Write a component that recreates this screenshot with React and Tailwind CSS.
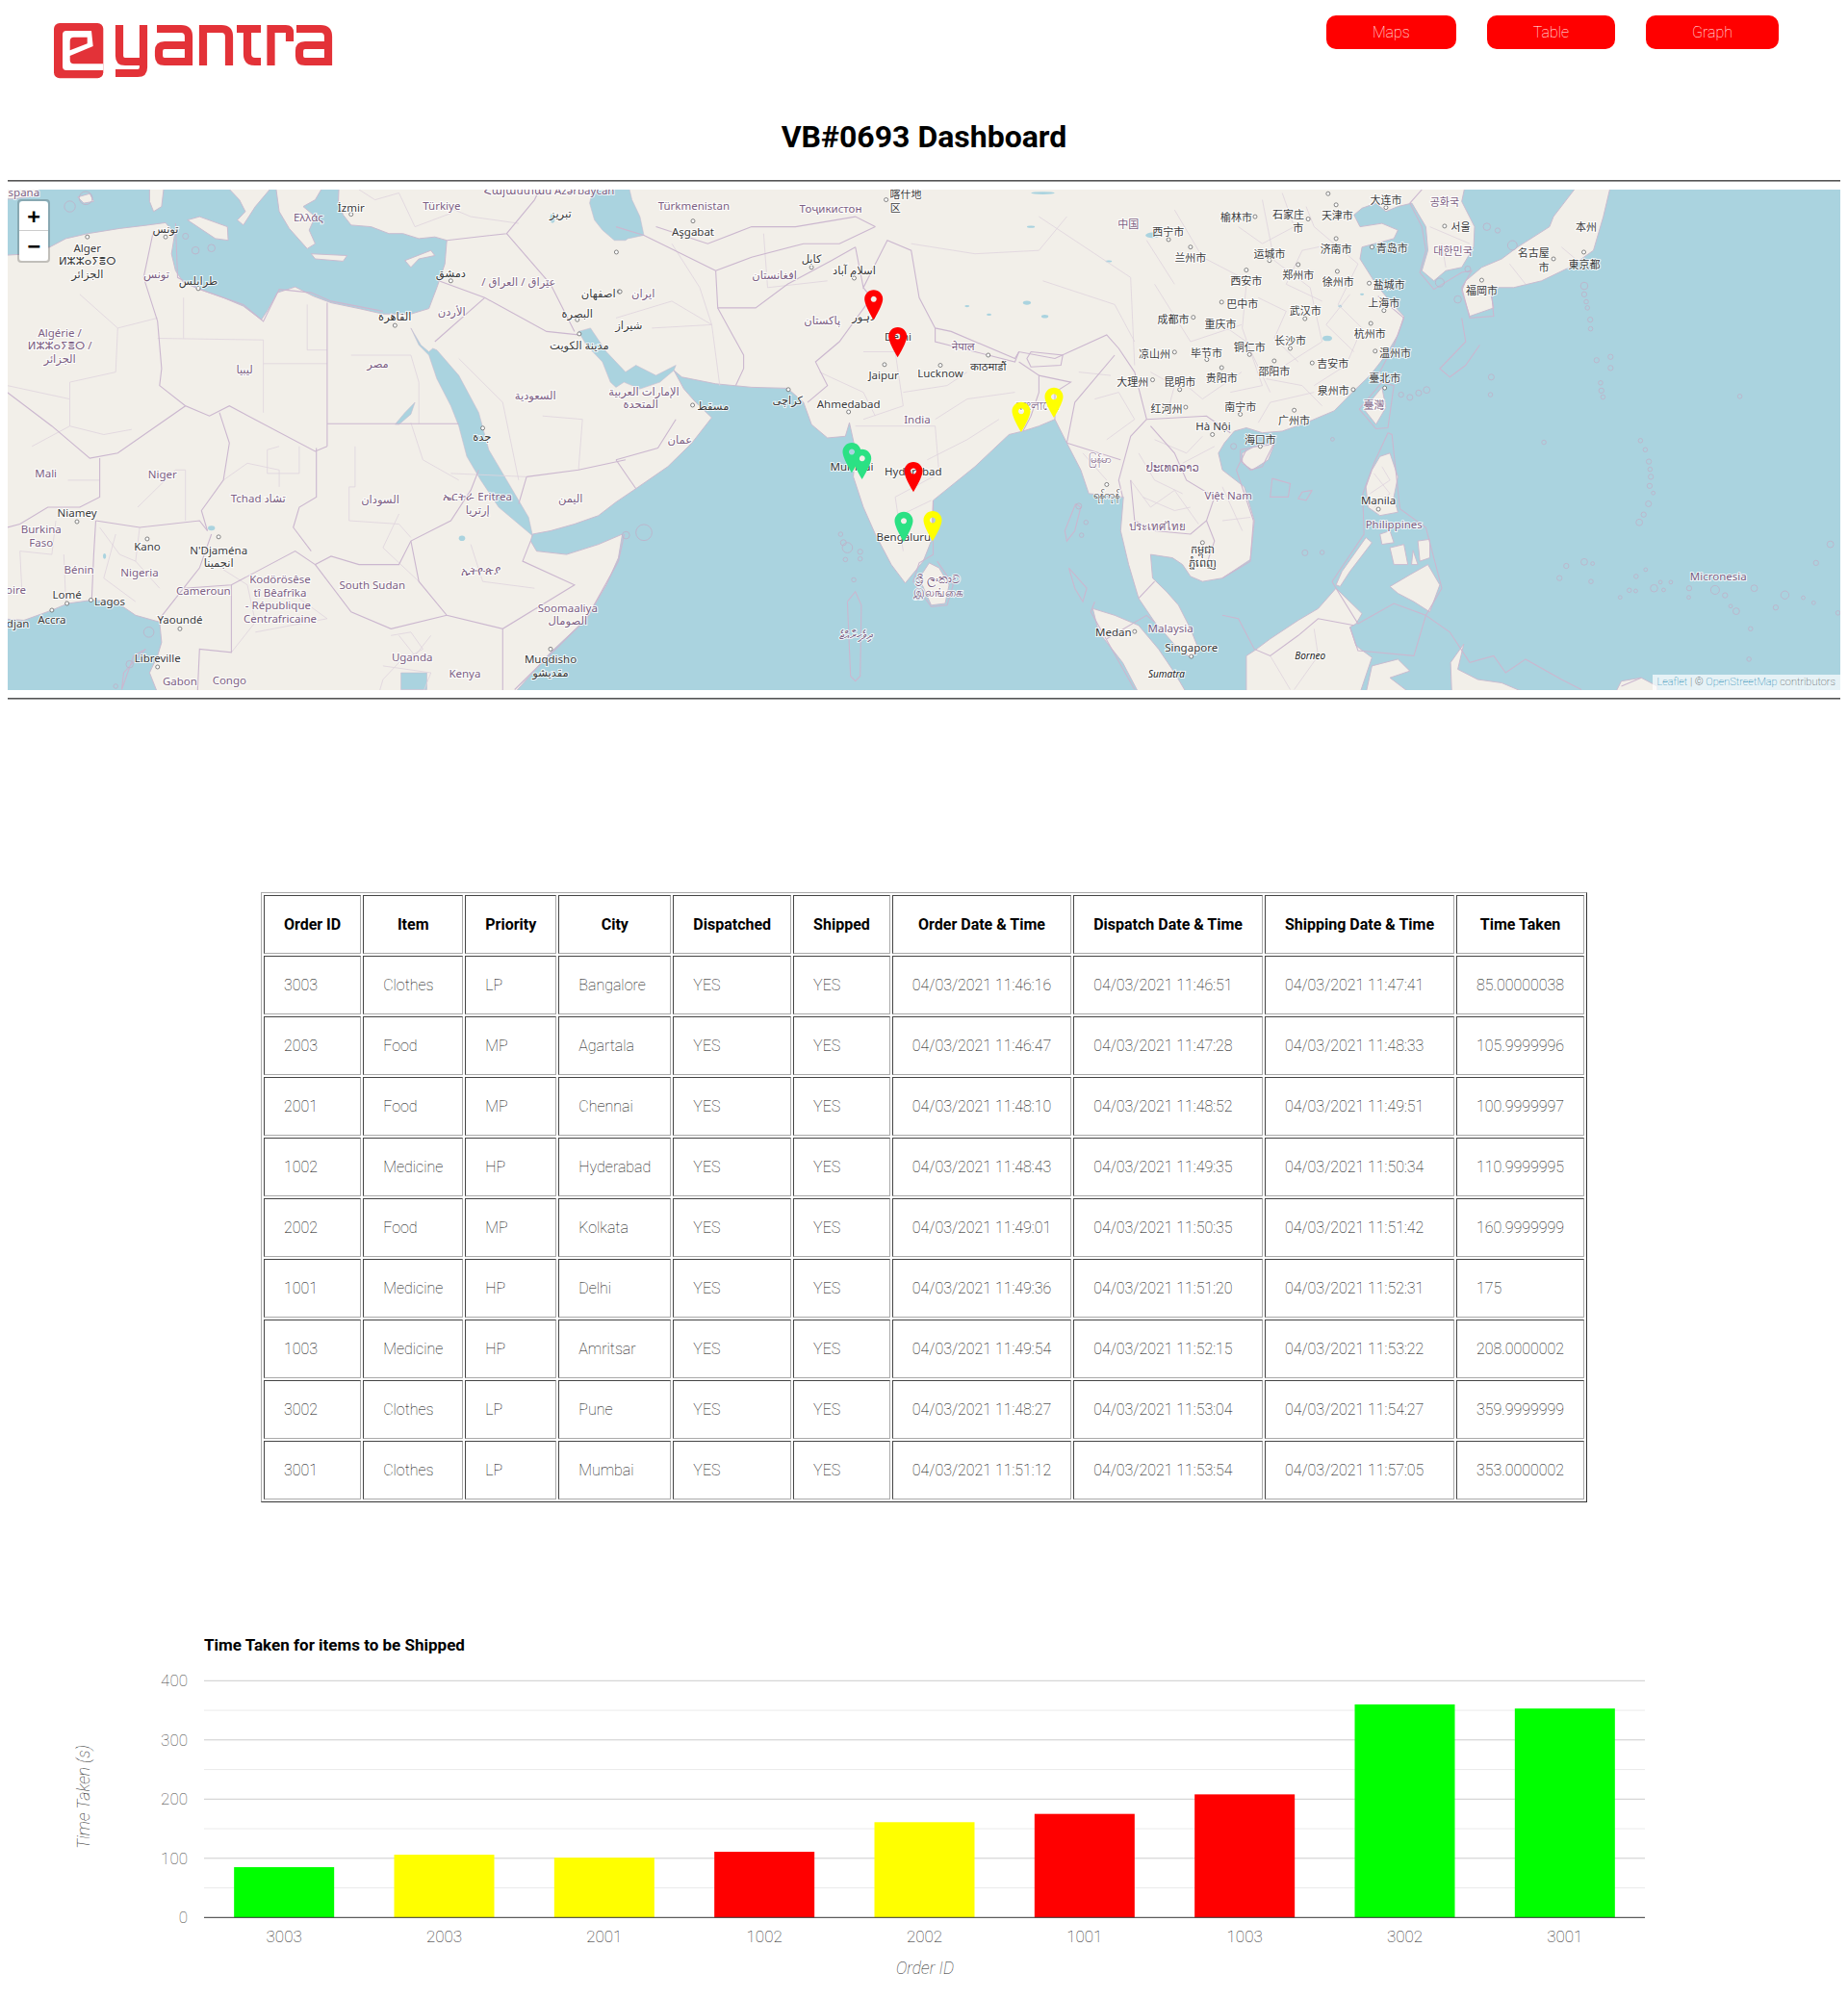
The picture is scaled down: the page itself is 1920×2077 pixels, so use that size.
import React from "react";

const Z = { a: 0, b: 640, c: 1270 };
const pt = (z, x, y) => [Z[z] + x * 0.4145, 190 + y * 0.351];
const path = (segs, close = true) => {
  const out = [];
  segs.forEach(([z, s]) => {
    s.trim().split(/\s+/).forEach((p) => {
      const [x, y] = p.split(",").map(Number);
      const q = pt(z, x, y);
      out.push(q[0].toFixed(1) + " " + q[1].toFixed(1));
    });
  });
  return "M" + out.join("L") + (close ? "Z" : "");
};

const LAND = [
  [[
    ["a", "0,215 48,212 80,200 125,190 165,165 220,150 300,135 370,125 415,118 438,150 430,210 440,260 460,295 500,315 560,340 610,365 655,405 672,375 695,325 740,308 785,335 830,355 900,372 960,388 1030,388 1075,372 1095,310 1115,240 1120,170 1090,160 1050,165 1010,150 975,150 930,130 880,125 860,95 848,60 850,0"],
    ["c", "610,0 600,55 632,130 630,190 600,250 560,260 530,290 500,260 515,200 510,130 490,90 475,60 440,70 410,85 385,60 350,75 330,95 345,130 400,120 440,140 430,165 350,190 345,225 385,300 420,350 455,395 440,450 410,510 370,570 330,615 280,675 210,710 150,735 100,740 60,725 30,735 5,770 -10,800 0,850 55,900 80,1000 70,1115 0,1170"],
    ["b", "1470,1180 1440,1165 1420,1130 1395,1110 1340,1100 1345,1170 1380,1210 1410,1250 1440,1320 1460,1380 1440,1405 1410,1380 1350,1300 1310,1230 1285,1130 1265,1030 1272,930 1230,925 1185,920 1165,850 1130,770 1100,700 1060,720 1020,735 985,745 900,840 795,940 790,1060 770,1120 725,1185 690,1130 650,1040 620,960 595,870 600,790 585,710 575,750 530,755 490,715 470,650 430,608 340,605 250,595 165,575 145,555 170,610 200,650 240,695 190,770 130,840 50,905 0,945"],
    ["a", "1500,985 1440,1010 1380,1030 1335,1040 1330,1060 1345,1090 1420,1100 1500,1070 1560,1040 1550,1110 1520,1190 1470,1290 1380,1390 1290,1510 395,1510 375,1450 395,1400 405,1360 400,1300 340,1280 290,1240 230,1235 170,1245 130,1265 60,1295 0,1290"],
  ]],
  [[["a", "0,0 105,0 85,40 30,48 0,48"]]],
  [[["a", "560,0 600,50 615,85 595,110 610,125 640,70 690,0"]]],
  [[["a", "470,110 500,100 570,130 572,170 540,165"]]],
  [[["a", "375,0 412,0 405,70 385,85 375,55"]]],
  [[["a", "690,0 700,85 725,135 770,195 790,180 775,140 790,100 760,70 790,50 815,0"]]],
  [[["a", "780,210 870,215 860,232 790,225"]]],
  [[["a", "1015,230 1080,200 1090,215 1050,225 1030,250"]]],
  [[["a", "195,42 225,32 235,55 210,60"]]],
  [[["c", "895,0 830,100 820,130 740,190 700,225 650,250 610,290 600,320 620,395 680,370 670,310 730,310 800,290 870,250 930,200 955,100 975,0"]]],
  [[["c", "50,800 80,780 130,775 115,820 75,850 50,830"]]],
  [[["c", "400,605 355,670 385,715 410,665"]]],
  [[["c", "395,810 375,850 360,900 365,960 395,985 440,975 430,930 440,870 420,800"]]],
  [[["c", "420,1195 470,1160 515,1130 545,1190 520,1270 480,1240 440,1215"]]],
  [[["c", "490,1060 520,1055 520,1110 495,1120"]]],
  [[["c", "420,1080 455,1070 465,1130 430,1130"]]],
  [[["c", "395,1040 420,1030 430,1065 400,1070"]]],
  [[["c", "478,1088 490,1130 474,1130"]]],
  [[["c", "285,1190 300,1150 360,1050 375,1065 320,1150 295,1195"]]],
  [[["c", "60,1510 60,1400 80,1385 120,1350 190,1295 240,1260 285,1200 350,1275 335,1305 320,1315 335,1370 375,1405 345,1510"]]],
  [[["c", "360,1510 375,1430 440,1410 470,1445 420,1465 470,1510"]]],
  [[["c", "575,1510 572,1420 605,1365 590,1440 640,1470 700,1480 760,1510"]]],
  [[["c", "985,1510 1000,1475 1050,1465 1090,1490 1090,1510"]]],
  [[["b", "785,1125 760,1170 790,1250 825,1245 835,1190 810,1140"]]],
  [[["b", "1195,1260 1210,1330 1270,1420 1310,1510 1430,1510 1400,1450 1360,1380 1310,1310 1250,1280"]]],
];

const WATER = [
  [["a", "1490,0 1478,60 1490,110 1510,140 1540,170 1568,170"], ["b", "30,165 70,155 60,100 40,50 30,0"]],
  [["a", "1450,440 1480,430 1520,500 1568,560"], ["b", "50,540 100,570 150,540 145,555 110,590 60,610 20,590 0,605"], ["a", "1530,590 1510,530 1470,480"]],
  [["a", "1030,430 1050,480 1075,510 1095,580 1130,660 1150,720 1170,810 1205,880 1250,960 1310,1020 1335,1045 1325,990 1280,900 1225,790 1200,680 1150,570 1095,495 1085,490 1075,500 1055,480"]],
  [["a", "990,715 1015,680 1040,650 1030,685 1000,715"]],
  [["a", "1005,1500 1005,1450 1070,1450 1070,1500"]],
];

const LAKES = [
  ["a", 1385, 105, 6, 14], ["a", 1158, 1052, 8, 8], ["a", 530, 1022, 9, 7], ["a", 262, 1105, 4, 8],
  ["b", 1345, 155, 18, 8], ["b", 1030, 355, 10, 6], ["b", 1075, 395, 9, 5], ["b", 935, 390, 6, 3], ["b", 880, 365, 6, 3], ["b", 1040, 130, 10, 3], ["b", 1070, 30, 30, 4], ["b", 1235, 232, 8, 3],
  ["c", 263, 460, 12, 8], ["c", 295, 365, 5, 4], ["c", 350, 330, 5, 3],
];

const MAJOR = [
  ["a", "385,140 360,280 395,410 405,550 400,600 465,660"],
  ["a", "18,620 130,720 225,815 295,800 465,660 525,690 575,660 790,795 820,780"],
  ["a", "820,355 820,780"],
  ["a", "820,713 1150,713"],
  ["a", "793,785 793,930 750,960 735,1020 780,1090"],
  ["a", "550,680 575,770 560,880 505,970 520,1030"],
  ["a", "250,815 250,930 200,960 120,960 50,1010 18,1020"],
  ["a", "240,1000 350,1020 500,1000 520,1030"],
  ["a", "530,1040 500,1140 460,1200 400,1290"],
  ["a", "240,1000 235,1100 230,1235"],
  ["a", "460,1200 580,1190 740,1090 790,1130 830,1105 900,1130 1000,1130 1030,1060 1130,1000 1180,910 1200,850"],
  ["a", "1030,1060 1050,1180 1120,1280 1260,1320 1440,1190 1310,1120 1330,1060"],
  ["a", "790,1130 880,1270 980,1320 1120,1280"],
  ["a", "1260,1320 1260,1510"],
  ["a", "580,1190 580,1390 500,1380 495,1510"],
  ["a", "1100,290 1215,340 1370,440 1450,450"],
  ["a", "1090,470 1215,340"],
  ["a", "1120,170 1270,150 1340,50 1360,0"],
  ["a", "1270,150 1380,300 1440,440"],
  ["a", "1320,870 1450,850 1568,820"],
  ["a", "1320,870 1300,950"],
  ["b", "0,820 105,785 150,700"],
  ["b", "0,820 50,905"],
  ["b", "250,260 340,220 470,180 560,180 650,130"],
  ["b", "250,260 255,370 350,370 430,300 540,230 600,190"],
  ["b", "255,370 320,510 320,550 300,600"],
  ["b", "620,310 640,340 560,470 500,530 530,600 480,650"],
  ["b", "600,190 620,310 680,170 740,200 760,340 800,430 840,440 1000,520 1010,500 1100,520 1230,450 1260,490 1300,560 1330,700 1290,750 1260,880 1270,930"],
  ["b", "800,430 800,470 1000,530 1010,500"],
  ["b", "1040,500 1120,510 1115,540 1040,545 1030,520 1040,500"],
  ["b", "1130,770 1150,650 1250,510"],
  ["b", "1010,530 1060,570 1060,620 1040,690 1020,735"],
  ["b", "1060,570 1140,590 1100,620 1100,700"],
  ["b", "1330,700 1480,690 1540,740"],
  ["b", "1340,720 1400,800 1430,880 1500,930 1480,1000 1440,1040 1350,1030 1300,1000 1290,880"],
  ["b", "1480,1000 1500,1060 1480,1130"],
  ["b", "1350,1180 1310,1230"],
  ["b", "100,130 230,180 340,130 450,130 600,100 650,130"],
  ["b", "0,130 70,155 250,260"],
  ["b", "1230,1350 1330,1280 1350,1300"],
  ["c", "0,1280 40,1290 80,1380 120,1400 190,1340 240,1290 330,1310"],
  ["c", "320,1315 340,1385 480,1400 510,1280 570,1330 620,1420 680,1400 710,1450 760,1410 850,1470 900,1500"],
  ["c", "1000,1490 1050,1465"],
  ["c", "343,670 400,590 430,600 415,725 385,728 343,670"],
  ["c", "415,740 380,830 352,920 355,1040 275,1180 285,1200 340,1305 430,1245 510,1280 550,1200 510,1020 445,965 430,800 425,745 415,740"],
  ["c", "45,790 130,770 100,840 70,850 45,820 45,790"],
  ["c", "500,20 470,60 500,130 510,200 495,265 530,315 600,265 625,260 600,310 620,400 680,395 675,330"],
  ["c", "600,400 610,470 545,550 570,575 610,540 645,480"],
  ["c", "125,875 170,890 165,930 120,930 125,875"],
  ["c", "225,910 210,940 190,935 200,915 225,910"],
  ["c", "390,335 455,400 430,480 390,570"],
  ["c", "60,790 35,850 78,1000 70,1120 0,1170"],
  ["b", "1200,1240 1190,1270 1300,1500"],
  ["b", "580,1240 600,1210 615,1250 612,1460 600,1475 588,1460 580,1240"],
  ["b", "795,940 795,1100 760,1125 745,1180 790,1255 830,1250 845,1190 805,1120"],
  ["b", "1152,950 1125,1030 1130,1060 1150,1030 1165,960 1152,950"],
  ["b", "1135,1140 1180,1200 1170,1240 1150,1200 1135,1140"],
  ["b", "1265,820 1130,770"],
  ["a", "1290,1500 1470,1290 1550,1120 1565,1040"],
  ["a", "305,1500 335,1400 365,1380 310,1450 305,1500"],
  ["a", "440,120 445,280 500,315 610,360 660,410 700,315 780,325 830,350 960,380"],
];

const MINOR = [
  ["a", "18,600 175,640 175,720 260,745 330,730"], ["a", "295,430 290,560 175,590 175,640"], ["a", "200,330 295,430 395,400"], ["a", "395,460 660,465 660,620 660,680"],
  ["a", "660,535 820,535"], ["a", "770,360 770,495 820,495"], ["a", "460,340 460,460"], ["a", "700,780 670,790 670,860 750,860 750,780"], ["a", "560,880 620,830 700,850 700,900"],
  ["a", "890,780 890,900 875,900 875,1000 1000,1010 1030,1050"], ["a", "880,510 1030,510 1050,590 1050,713"], ["a", "1030,710 1060,820 1150,880"], ["a", "345,960 440,850 465,850 465,1000"],
  ["a", "80,780 175,720"], ["a", "170,880 250,880"], ["a", "140,1000 130,1100 50,1090 55,1210"], ["a", "160,1100 165,1240"], ["a", "350,1020 340,1120 400,1200"], ["a", "540,1130 620,1190 640,1300 580,1390"],
  ["a", "1150,520 1260,650 1300,880"], ["a", "1130,860 1320,870"], ["a", "1360,690 1460,700 1450,850"], ["a", "1180,1070 1210,1180 1340,1200"], ["a", "1050,1180 960,1080 1000,980"], ["a", "750,1230 820,1290 640,1330"],
  ["a", "980,1340 1030,1330 1060,1380 1000,1420 960,1470 950,1510"], ["a", "1000,1340 1040,1400 1080,1340"], ["a", "960,1430 1080,1450 1060,1510"], ["a", "250,1020 300,1100 340,1120"], ["a", "290,1040 260,1170 340,1240"], ["a", "1100,60 1180,100 1300,120"], ["a", "1000,30 1040,130 1130,90"], ["a", "900,20 940,50 1000,30"],
  ["b", "140,180 210,310 240,420 140,350 0,400"], ["b", "90,430 240,420 260,600"], ["b", "370,150 380,310 530,290"], ["b", "620,500 700,500 720,660 620,700"], ["b", "600,720 800,720 810,860 700,930 720,1090"], ["b", "800,700 880,640 1000,620"], ["b", "720,620 830,600 880,560"],
  ["b", "1060,100 1290,280 1300,540"], ["b", "1070,290 1250,360 1300,470"], ["b", "1400,80 1470,220 1568,280"], ["b", "1350,300 1440,470 1568,420"], ["b", "1330,170 1400,300"], ["b", "1400,570 1470,640 1568,560"], ["b", "1380,690 1400,600 1340,560"], ["b", "1290,880 1340,960 1400,910 1460,1010"], ["b", "1170,800 1230,880"], ["b", "1420,830 1500,780"], ["b", "740,180 900,210 1060,200 1130,100"],
  ["b", "1350,760 1430,800 1470,750"], ["b", "1310,800 1350,880 1420,920"], ["b", "1200,640 1260,620 1300,700 1230,760"], ["b", "1320,930 1400,970 1440,960"], ["b", "1160,560 1240,570"], ["b", "510,560 620,620 650,690"], ["b", "780,820 880,760 960,700"], ["b", "720,980 790,940"],
  ["c", "100,50 130,230 220,310 250,470 130,560"], ["c", "210,70 230,130 340,240 290,360 350,430 310,540 230,600"], ["c", "60,300 50,430 100,600 20,620"], ["c", "110,580 200,600 250,660"], ["c", "0,420 60,470 120,620"], ["c", "370,920 420,880 400,840"], ["c", "120,1400 170,1500"], ["c", "230,1320 240,1400 180,1500"], ["c", "520,130 620,180"], ["c", "850,190 900,240"], ["c", "720,240 760,300"], ["c", "550,180 560,250"],
  ["c", "150,30 180,130 100,180 40,130"], ["c", "280,180 200,200 160,300 250,350"], ["c", "90,340 160,380 130,460 190,530"], ["c", "320,330 260,420 330,500"], ["c", "230,620 120,650 90,710"], ["c", "380,860 420,920 380,960"],
  ["c", "0,1000 70,990"], ["c", "0,900 50,1030"],
];

const RINGS = [
  ["c",663,130,10],["c",690,141,7],["c",727,185,13],["c",907,305,10],["c",907,330,7],["c",912,352,6],["c",915,370,6],["c",922,405,7],["c",923,432,6],["c",938,525,7],["c",674,575,8],["c",672,627,6],["c",948,592,6],["c",950,615,7],["c",954,634,6],["c",1297,632,6],["c",806,768,6],["c",276,759,5],["c",1048,763,6],["c",1060,790,6],["c",1069,825,7],["c",1072,848,6],["c",1074,870,7],["c",1071,897,7],["c",1080,918,5],["c",1068,950,8],["c",1056,982,7],["c",1045,1005,9],["c",1524,1070,9],["c",1488,1125,7],["c",907,1122,9],["c",928,1127,5],["c",862,1134,7],["c",845,1170,7],["c",924,1180,6],["c",1061,1145,5],["c",1037,1165,6],["c",1098,1182,5],["c",1124,1182,5],["c",1020,1206,6],["c",1036,1208,5],["c",997,1227,5],["c",1082,1200,10],["c",1106,1205,5],["c",1170,1200,7],["c",1169,1227,5],["c",1235,1205,12],["c",1260,1221,7],["c",1333,1200,9],["c",1410,1220,11],["c",1456,1228,5],["c",1482,1243,5],["c",1387,1257,7],["c",1274,1253,5],["c",1288,1268,9],["c",1324,1320,6],["c",1320,1410,6],["c",1543,1273,6],["c",250,1094,6],["c",207,1095,8],["c",973,515,7],["c",973,548,7],["c",448,627,7],["c",470,635,8],["c",492,622,8],["c",512,613,9],["c",590,345,10],["c",615,255,8],["c",545,295,12],
  ["a",290,1490,6],["a",373,1330,14],["a",530,193,10],["a",490,200,10],["a",465,158,8],["a",175,70,15],["a",215,45,18],["a",325,1425,10],
  ["b",25,1043,10],["b",70,1035,22],["b",563,1040,6],["b",570,1065,8],["b",580,1080,14],["b",612,1092,7],["b",612,1113,6],["b",575,1115,6],["b",596,1175,6],["b",1160,957,8],["b",1178,1005,6],["b",1167,1043,6],["b",1548,780,8],
];

const DOTS = [
  ["a",219,160],["a",415,160],["a",497,313],["a",880,93],["a",1130,290],["a",990,422],["a",1452,447],["a",1545,205],["a",1210,726],["a",193,1003],["a",369,1054],["a",548,1048],["a",168,1245],["a",228,1235],["a",130,1265],["a",451,1320],["a",395,1433],["a",1380,1380],["a",1552,322],["a",1447,405],
  ["b",193,113],["b",490,250],["b",597,282],["b",432,612],["b",583,678],["b",673,538],["b",813,540],["b",933,510],["b",192,658],["b",677,50],["b",1495,745],["b",1470,1065],["b",1442,1402],["b",1300,1328],["b",1230,893],["b",1385,168],["b",1440,190],["b",1518,353],["b",1447,398],["b",1400,501],["b",1345,583],["b",1413,612],["b",1481,523],["b",1518,547],["b",1428,664],["b",10,322],
  ["c",265,32],["c",285,65],["c",285,165],["c",410,73],["c",557,128],["c",906,205],["c",407,607],["c",391,966],["c",830,225],["c",650,288],["c",375,190],["c",368,297],["c",405,378],["c",372,416],["c",383,498],["c",225,533],["c",328,612],["c",180,673],["c",95,780],["c",118,230],["c",190,242],["c",60,258],["c",288,262],["c",207,402],["c",170,490],["c",68,508],["c",130,527],["c",45,685],["c",215,107],["c",82,100],
];

const C = 0, T = 1, I = 2;
const LABELS = [
  ["a",60,27,"spana",C],["a",880,72,"İzmir",T],["a",773,100,"Ελλάς",C],["a",1107,66,"Türkiye",C],["a",1465,20,"Azərbaycan",C],["a",1298,20,"Հայաստան",C],["a",1405,90,"تبريز",T],["a",415,135,"تونس",T],["a",392,270,"تونس",C],["a",219,192,"Alger",T],["a",219,228,"ⵍⵣⵣⴰⵢⴻⵔ",T],["a",219,268,"الجزائر",T],["a",497,290,"طرابلس",T],["a",1130,265,"دمشق",T],["a",990,395,"القاهرة",T],["a",947,535,"مصر",C],["a",613,550,"ليبيا",C],["a",1132,380,"الأردن",C],["a",1300,292,"/ عێراق / العراق",C],["a",1500,327,"اصفهان",T],["a",1447,385,"البصرة",T],["a",1452,480,"مدينة الكويت",T],["a",1342,628,"السعودية",C],["a",1208,750,"جدة",T],["a",150,442,"Algérie /",C],["a",150,480,"ⵍⵣⵣⴰⵢⴻⵔ /",C],["a",150,520,"الجزائر",C],["a",115,860,"Mali",C],["a",407,863,"Niger",C],["a",647,933,"Tchad تشاد",C],["a",953,937,"السودان",C],["a",1197,928,"ኤርትራ Eritrea",C],["a",1197,967,"إرتريا",C],["a",1430,932,"اليمن",C],["a",193,975,"Niamey",T],["a",103,1025,"Burkina",C],["a",103,1064,"Faso",C],["a",369,1075,"Kano",T],["a",548,1086,"N'Djaména",T],["a",548,1124,"انجمينا",T],["a",198,1145,"Bénin",C],["a",350,1153,"Nigeria",C],["a",1205,1148,"ኢትዮጵያ",C],["a",702,1173,"Kodörösêse",C],["a",702,1212,"tî Bêafrîka",C],["a",697,1250,"- République",C],["a",702,1288,"Centrafricaine",C],["a",933,1189,"South Sudan",C],["a",510,1206,"Cameroun",C],["a",40,1203,"oire",C],["a",168,1218,"Lomé",T],["a",275,1238,"Lagos",T],["a",1423,1257,"Soomaaliya",C],["a",1423,1296,"الصومال",C],["a",130,1293,"Accra",T],["a",45,1303,"djan",T],["a",451,1292,"Yaoundé",T],["a",395,1405,"Libreville",T],["a",1033,1402,"Uganda",C],["a",1380,1410,"Muqdisho",T],["a",1380,1450,"مقديشو",T],["a",1165,1452,"Kenya",C],["a",451,1475,"Gabon",C],["a",575,1471,"Congo",C],
  ["b",195,67,"Türkmenistan",C],["b",193,145,"Aşgabat",T],["b",538,75,"Тоҷикистон",C],["b",726,33,"喀什地",T],["b",700,74,"区",T],["b",1284,120,"中国",C],["b",1384,144,"西宁市",T],["b",1440,220,"兰州市",T],["b",1555,288,"西",T],["b",490,225,"كابل",T],["b",597,257,"اسلام آباد",T],["b",397,272,"افغانستان",C],["b",68,327,"ایران",C],["b",32,420,"شیراز",T],["b",517,407,"پاکستان",C],["b",622,395,"لاہور",T],["b",707,453,"Delhi",T],["b",671,568,"Jaipur",T],["b",813,564,"Lucknow",T],["b",870,482,"नेपाल",C],["b",933,543,"काठमाडौं",T],["b",583,655,"Ahmedabad",T],["b",430,642,"کراچی",T],["b",755,699,"India",C],["b",70,616,"الإمارات العربية",C],["b",62,654,"المتحدة",C],["b",243,660,"مسقط",T],["b",160,760,"عمان",C],["b",1057,660,"বাংলাদেশ",C],["b",1212,815,"မြန်မာ",C],["b",1230,922,"ရန်ကုန်",T],["b",591,840,"Mumbai",T],["b",745,852,"Hyderabad",T],["b",721,1046,"Bengaluru",T],["b",807,1172,"ශ්‍රී ලංකාව",C],["b",807,1212,"இலங்கை",C],["b",600,1337,"ދިވެހިރާއްޖެ",C],["b",1397,403,"成都市",T],["b",1515,417,"重庆市",T],["b",1350,505,"凉山州",T],["b",1480,502,"毕节市",T],["b",1295,588,"大理州",T],["b",1413,588,"昆明市",T],["b",1518,577,"贵阳市",T],["b",1380,667,"红河州",T],["b",1497,720,"Hà Nội",T],["b",1395,843,"ປະເທດລາວ",C],["b",1357,1017,"ประเทศไทย",C],["b",1470,1085,"កម្ពុជា",T],["b",1470,1125,"ភ្នំពេញ",T],["b",1247,1330,"Medan",T],["b",1390,1318,"Malaysia",C],["b",1442,1376,"Singapore",T],["b",1380,1452,"Sumatra",I],
  ["c",35,100,"榆林市",T],["c",165,93,"石家庄",T],["c",190,133,"市",T],["c",288,96,"天津市",T],["c",410,50,"大连市",T],["c",557,55,"공화국",C],["c",597,130,"서울",T],["c",912,130,"本州",T],["c",118,208,"运城市",T],["c",285,195,"济南市",T],["c",425,193,"青岛市",T],["c",578,201,"대한민국",C],["c",780,207,"名古屋",T],["c",806,248,"市",T],["c",907,240,"東京都",T],["c",60,288,"西安市",T],["c",190,272,"郑州市",T],["c",290,292,"徐州市",T],["c",418,300,"盐城市",T],["c",650,317,"福岡市",T],["c",50,357,"巴中市",T],["c",405,355,"上海市",T],["c",208,378,"武汉市",T],["c",370,445,"杭州市",T],["c",68,485,"铜仁市",T],["c",170,467,"长沙市",T],["c",433,502,"温州市",T],["c",130,556,"邵阳市",T],["c",277,535,"吉安市",T],["c",407,577,"臺北市",T],["c",278,615,"泉州市",T],["c",45,661,"南宁市",T],["c",380,657,"臺灣",C],["c",180,703,"广州市",T],["c",95,758,"海口市",T],["c",15,925,"Việt Nam",C],["c",391,938,"Manila",T],["c",430,1010,"Philippines",C],["c",1243,1165,"Micronesia",C],["c",220,1398,"Borneo",I],
];

const PINS = [
  [907.7, 332.3, "#ff0000"], [932.7, 371, "#ff0000"], [949, 511, "#ff0000"],
  [885, 491, "#2be184"], [895.7, 497.7, "#2be184"], [939, 562.7, "#2be184"],
  [969, 562, "#ffff00"], [1061, 448.7, "#ffff00"], [1095, 433.7, "#ffff00"],
];
const PIN_D = "M12.5 0C5.6 0 0 5.6 0 12.5C0 21 12.5 41 12.5 41S25 21 25 12.5C25 5.6 19.4 0 12.5 0ZM12.5 8.5A4 4 0 1 1 12.49 8.5Z";
const CJK = /[\u3400-\u9fff\uac00-\ud7af]/;

function MapDrawing() {
  return (
    <svg viewBox="8 197 1904 520" className="block w-full h-full font-['Noto_Sans','DejaVu_Sans','Noto_Sans_CJK_SC',sans-serif]">
      <rect x="8" y="197" width="1904" height="520" className="fill-[#aad3df]" />
      {LAND.map(([segs], i) => (
        <path key={i} d={path(segs)} className="fill-[#f2efe9] stroke-[#c9bcd0] stroke-[1px]" />
      ))}
      {WATER.map((segs, i) => (
        <path key={i} d={path(segs)} className="fill-[#aad3df] stroke-[#c9bcd0] stroke-[0.6px]" />
      ))}
      {LAKES.map(([z, x, y, rx, ry], i) => {
        const q = pt(z, x, y);
        return <ellipse key={i} cx={q[0]} cy={q[1]} rx={rx * 0.41} ry={ry * 0.35} className="fill-[#aad3df]" />;
      })}
      {MINOR.map(([z, s], i) => (
        <path key={i} d={path([[z, s]], false)} className="fill-none stroke-[#ded3dd] stroke-[0.8px]" />
      ))}
      {MAJOR.map(([z, s], i) => (
        <path key={i} d={path([[z, s]], false)} className="fill-none stroke-[#cbb7cf] stroke-[1.1px]" />
      ))}
      {RINGS.map(([z, x, y, r], i) => {
        const q = pt(z, x, y);
        return <circle key={i} cx={q[0]} cy={q[1]} r={r * 0.38} className="fill-none stroke-[#bdb3c9] stroke-[0.9px]" />;
      })}
      {DOTS.map(([z, x, y], i) => {
        const q = pt(z, x, y);
        return <circle key={i} cx={q[0]} cy={q[1]} r="2" className="fill-white stroke-[#666] stroke-[0.8px]" />;
      })}
      {LABELS.map(([z, x, y, t, k], i) => {
        const q = pt(z, x, y);
        const size = k === I ? "text-[10px] italic" : CJK.test(t) ? "text-[11px]" : "text-[11.5px]";
        const tone = k === C ? "fill-[#7c5f83]" : k === I ? "fill-[#222]" : "fill-[#3a3a3a]";
        return (
          <text
            key={i}
            x={q[0]}
            y={q[1]}
            textAnchor="middle"
            dominantBaseline="central"
            className={"stroke-white/80 stroke-[2px] [paint-order:stroke] " + size + " " + tone}
          >
            {t}
          </text>
        );
      })}
      {PINS.map(([x, y, c], i) => (
        <path key={i} d={PIN_D} fill={c} fillRule="evenodd" transform={`translate(${x - 9.5} ${y - 31}) scale(0.76)`} />
      ))}
    </svg>
  );
}

function Logo() {
  const s = "fill-none stroke-[#e33238] stroke-[8.2px]";
  return (
    <svg viewBox="56 24 290 58" className="block w-[290px] h-[58px]" aria-label="e-yantra logo">
      <rect x="56" y="24" width="51.3" height="57.3" rx="6" className="fill-[#e33238]" />
      <path d="M69 32H95L96.7 48L72.7 58V62.3Q72.7 66.3 76.7 66.3H107.3V73H69Q65 73 65 69V36Q65 32 69 32Z" className="fill-white" />
      <path d="M76.7 38.7H90.7V45.3L72.7 52.2V42.7Q72.7 38.7 76.7 38.7Z" className="fill-[#e33238]" />
      <path d="M124 26V58Q124 64 130 64H149" className={s} />
      <path d="M149 26V70Q149 76 143 76H120" className={s} />
      <path d="M163 30H188Q196 30 196 38V68M196 47H171Q165 47 165 53V58Q165 64 171 64H196" className={s} />
      <path d="M211 68V30H230Q238 30 238 38V68" className={s} />
      <path d="M246 30H271M257 26V56Q257 64 265 64H271" className={s} />
      <path d="M281.5 68V30H297Q301 30 301 34V43" className={s} />
      <path d="M308 30H333Q341 30 341 38V68M341 47H317Q311 47 311 53V58Q311 64 317 64H341" className={s} />
    </svg>
  );
}

const HEAD = ["Order ID", "Item", "Priority", "City", "Dispatched", "Shipped", "Order Date & Time", "Dispatch Date & Time", "Shipping Date & Time", "Time Taken"];
const ROWS = [
  ["3003", "Clothes", "LP", "Bangalore", "YES", "YES", "04/03/2021 11:46:16", "04/03/2021 11:46:51", "04/03/2021 11:47:41", "85.00000038"],
  ["2003", "Food", "MP", "Agartala", "YES", "YES", "04/03/2021 11:46:47", "04/03/2021 11:47:28", "04/03/2021 11:48:33", "105.9999996"],
  ["2001", "Food", "MP", "Chennai", "YES", "YES", "04/03/2021 11:48:10", "04/03/2021 11:48:52", "04/03/2021 11:49:51", "100.9999997"],
  ["1002", "Medicine", "HP", "Hyderabad", "YES", "YES", "04/03/2021 11:48:43", "04/03/2021 11:49:35", "04/03/2021 11:50:34", "110.9999995"],
  ["2002", "Food", "MP", "Kolkata", "YES", "YES", "04/03/2021 11:49:01", "04/03/2021 11:50:35", "04/03/2021 11:51:42", "160.9999999"],
  ["1001", "Medicine", "HP", "Delhi", "YES", "YES", "04/03/2021 11:49:36", "04/03/2021 11:51:20", "04/03/2021 11:52:31", "175"],
  ["1003", "Medicine", "HP", "Amritsar", "YES", "YES", "04/03/2021 11:49:54", "04/03/2021 11:52:15", "04/03/2021 11:53:22", "208.0000002"],
  ["3002", "Clothes", "LP", "Pune", "YES", "YES", "04/03/2021 11:48:27", "04/03/2021 11:53:04", "04/03/2021 11:54:27", "359.9999999"],
  ["3001", "Clothes", "LP", "Mumbai", "YES", "YES", "04/03/2021 11:51:12", "04/03/2021 11:53:54", "04/03/2021 11:57:05", "353.0000002"],
];
const CELL = "border border-t-[#444] border-l-[#444] border-b-[#aaa] border-r-[#aaa] p-5 leading-[19px]";

const BARS = [
  ["3003", 85, "#00ff00"], ["2003", 106, "#ffff00"], ["2001", 101, "#ffff00"], ["1002", 111, "#ff0000"], ["2002", 161, "#ffff00"],
  ["1001", 175, "#ff0000"], ["1003", 208, "#ff0000"], ["3002", 360, "#00ff00"], ["3001", 353, "#00ff00"],
];

function Chart() {
  const left = 212, right = 1709, base = 1992.3, pxu = 0.615;
  const step = (right - left) / 9;
  return (
    <svg viewBox="0 1676 1920 402" className="block w-full h-[402px] font-['Roboto',sans-serif]">
      <text x={left} y="1709" dominantBaseline="central" className="fill-black font-bold text-[17px]">Time Taken for items to be Shipped</text>
      {[50, 150, 250, 350].map((v) => (
        <line key={v} x1={left} x2={right} y1={base - v * pxu} y2={base - v * pxu} className="stroke-[#ebebeb]" />
      ))}
      {[100, 200, 300, 400].map((v) => (
        <line key={v} x1={left} x2={right} y1={base - v * pxu} y2={base - v * pxu} className="stroke-[#cccccc]" />
      ))}
      {[0, 100, 200, 300, 400].map((v) => (
        <text key={v} x="195" y={base - v * pxu} textAnchor="end" dominantBaseline="central" className="fill-[#444] font-thin text-[17px]">{v}</text>
      ))}
      {BARS.map(([id, v, c], i) => (
        <g key={id}>
          <rect x={left + step * (i + 0.5) - 52} y={base - v * pxu} width="104" height={v * pxu} fill={c} />
          <text x={left + step * (i + 0.5)} y="2012" textAnchor="middle" dominantBaseline="central" className="fill-[#222] font-thin text-[17px]">{id}</text>
        </g>
      ))}
      <line x1={left} x2={right} y1={base} y2={base} className="stroke-[#333]" />
      <text x="961" y="2045" textAnchor="middle" dominantBaseline="central" className="fill-[#222] font-thin italic text-[17.5px]">Order ID</text>
      <text x="87" y="1867" textAnchor="middle" dominantBaseline="central" transform="rotate(-90 87 1867)" className="fill-[#222] font-thin italic text-[17.5px]">Time Taken (s)</text>
    </svg>
  );
}

export default function App() {
  return (
    <div className="w-full bg-white font-['Roboto',sans-serif] text-base">
      <header className="flex items-start justify-between pl-14 pr-[72px] pt-4 h-[123px]">
        <div className="pt-2"><Logo /></div>
        <nav className="flex gap-8">
          {["Maps", "Table", "Graph"].map((t) => (
            <button key={t} className="h-[35px] px-12 rounded-[10px] bg-[#ff0000] text-white font-thin">{t}</button>
          ))}
        </nav>
      </header>
      <h1 className="text-[32px] leading-[38px] font-bold text-center text-black">VB#0693 Dashboard</h1>
      <hr className="mx-2 mt-[26px] border-t border-t-[#555] border-b border-b-[#999]" />
      <section className="relative mx-2 mt-2 h-[520px] overflow-hidden bg-[#aad3df]">
        <MapDrawing />
        <div className="absolute left-[10px] top-[10px] w-[34px] rounded border-2 border-black/20 bg-clip-padding font-['DejaVu_Sans_Mono',monospace] font-bold text-black">
          <div className="flex h-[31px] items-center justify-center rounded-t-sm border-b border-b-[#ccc] bg-white text-[22px]">+</div>
          <div className="flex h-[31px] items-center justify-center rounded-b-sm bg-white text-[22px]">−</div>
        </div>
        <div className="absolute bottom-0 right-0 flex h-4 items-center bg-white/70 px-[5px] text-[11px] font-thin text-[#333]">
          <span className="text-[#0078a8]">Leaflet</span>
          <span>&nbsp;|&nbsp;©&nbsp;</span>
          <span className="text-[#0078a8]">OpenStreetMap</span>
          <span>&nbsp;contributors</span>
        </div>
      </section>
      <hr className="mx-2 mt-2 border-t border-t-[#555] border-b border-b-[#999]" />
      <table className="mx-auto mt-[200px] border-separate [border-spacing:2px] border border-t-[#aaa] border-l-[#aaa] border-b-[#333] border-r-[#333]">
        <thead>
          <tr>
            {HEAD.map((h) => (
              <th key={h} className={CELL + " font-bold text-black text-center"}>{h}</th>
            ))}
          </tr>
        </thead>
        <tbody>
          {ROWS.map((r) => (
            <tr key={r[0]}>
              {r.map((c, i) => (
                <td key={i} className={CELL + " font-thin text-black text-left"}>{c}</td>
              ))}
            </tr>
          ))}
        </tbody>
      </table>
      <div className="mt-[115px]"><Chart /></div>
    </div>
  );
}
